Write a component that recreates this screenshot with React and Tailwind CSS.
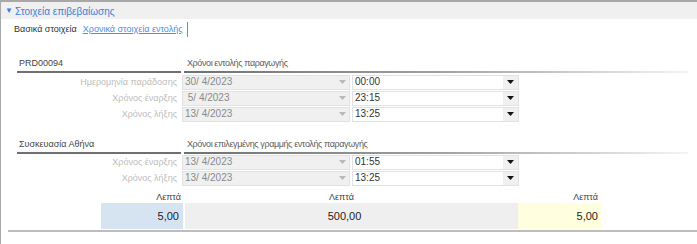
import React from 'react';

const font = { fontFamily: '"Liberation Sans", Arial, sans-serif' };

function Arrow({ light }) {
    return (
        <svg width="7" height="4" viewBox="0 0 7 4">
            <path d="M0 0 H7 L3.5 4 Z" fill={light ? '#b8b8b8' : '#111'} />
        </svg>
    );
}

function FieldRow({ label, date, time }) {
    return (
        <div className="flex items-center h-[16px]">
            <div className="w-[181px] pr-[5px] text-right text-[9px] text-[#bcbcbc] leading-none whitespace-nowrap">{label}</div>
            <div className="w-[168px] h-[15px] bg-[#f0f0f0] border border-[#e2e2e2] flex items-center">
                <span className="flex-1 pl-[2px] text-[10px] text-[#8a8a8a] whitespace-pre leading-none">{date}</span>
                <span className="w-[14px] flex justify-center"><Arrow light /></span>
            </div>
            <div className="ml-[2px] w-[167px] h-[15px] bg-white border border-[#e2e2e2] flex items-center">
                <span className="flex-1 pl-[2px] text-[10px] text-[#333] leading-none">{time}</span>
                <span className="w-[15px] h-full bg-[#f0f0f0] flex items-center justify-center"><Arrow /></span>
            </div>
        </div>
    );
}

function SectionHead({ left, right }) {
    return (
        <div className="flex items-end h-[16px]">
            <div className="ml-[16px] w-[164px]">
                <div className="pl-[2px] mb-[2px] text-[9px] text-[#444] leading-[11px] whitespace-nowrap">{left}</div>
                <div className="h-[2px] bg-[#707070]" />
            </div>
            <div className="ml-[3px] w-[504px]">
                <div className="pl-[3px] mb-[2px] text-[9px] tracking-[-0.4px] text-[#5c5c5c] leading-[11px] whitespace-nowrap">{right}</div>
                <div className="h-[2px] bg-gradient-to-r from-[#707070] via-[#a0a0a0] to-[#f4f4f4]" />
            </div>
        </div>
    );
}

export default function App() {
    return (
        <div className="w-[697px] h-[244px] bg-white border-l border-t-2 border-[#a8a8a8] overflow-hidden" style={font}>
            <div className="h-[17px] bg-[#f0f0f0] flex items-center pl-[4px] text-[10px] text-[#3d7fd8] leading-none">
                <span className="text-[8px] mr-[2px]">▼</span>
                <span className="mt-[2px]">Στοιχεία επιβεβαίωσης</span>
            </div>
            <div className="h-[20px] flex items-center pl-[13px] text-[9px] leading-none">
                <span className="text-[#333] mt-[1px]">Βασικά στοιχεία</span>
                <span className="ml-[6px] mt-[1px] text-[#4a90e2] underline">Χρονικά στοιχεία εντολής</span>
                <span className="ml-[4px] w-px h-[15px] bg-[#888]" />
            </div>

            <div className="mt-[18px]">
                <SectionHead left="PRD00094" right="Χρόνοι εντολής παραγωγής" />
                <div className="mt-[1px] flex flex-col">
                    <FieldRow label="Ημερομηνία παράδοσης" date="30/ 4/2023" time="00:00" />
                    <FieldRow label="Χρόνος έναρξης" date=" 5/ 4/2023" time="23:15" />
                    <FieldRow label="Χρόνος λήξης" date="13/ 4/2023" time="13:25" />
                </div>
            </div>

            <div className="mt-[16px]">
                <SectionHead left="Συσκευασία Αθήνα" right="Χρόνοι επιλεγμένης γραμμής εντολής παραγωγής" />
                <div className="flex flex-col">
                    <FieldRow label="Χρόνος έναρξης" date="13/ 4/2023" time="01:55" />
                    <FieldRow label="Χρόνος λήξης" date="13/ 4/2023" time="13:25" />
                </div>
            </div>

            <div className="mt-[5px] ml-[7px] w-[690px] border-b-2 border-[#bdbdbd] pb-[1px]">
                <div className="flex h-[12px] items-center text-[9px] text-[#444] leading-none">
                    <div className="ml-[93px] w-[82px] text-right pr-[2px]">Λεπτά</div>
                    <div className="ml-[2px] w-[333px] text-center pr-[20px]">Λεπτά</div>
                    <div className="w-[83px] text-right pr-[3px]">Λεπτά</div>
                </div>
                <div className="flex h-[26px] text-[11px] text-[#222] leading-none">
                    <div className="ml-[93px] w-[82px] bg-[#d6e4f2] flex items-center justify-end pr-[4px]">5,00</div>
                    <div className="ml-[2px] w-[333px] bg-[#efefef] flex items-center justify-center pr-[14px]">500,00</div>
                    <div className="w-[83px] bg-[#ffffe0] flex items-center justify-end pr-[3px]">5,00</div>
                </div>
            </div>
        </div>
    );
}
